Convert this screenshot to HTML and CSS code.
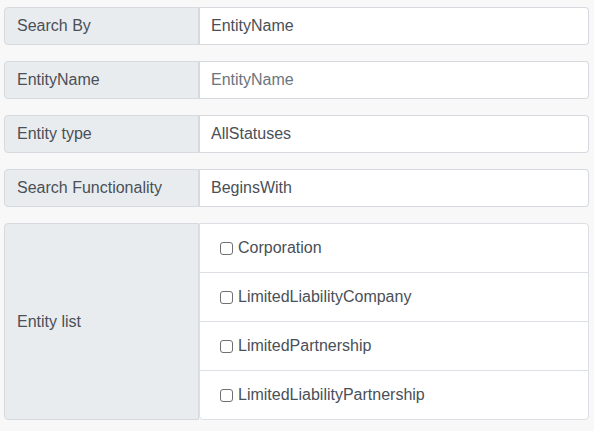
FILE: index.html
```html
<!DOCTYPE html>
<html>
<head>
<meta charset="utf-8">
<link rel="stylesheet" href="styles.css">
</head>
<body>
<div class="form">
  <div class="row">
    <div class="label">Search By</div>
    <div class="field">EntityName</div>
  </div>
  <div class="row">
    <div class="label">EntityName</div>
    <div class="field placeholder">EntityName</div>
  </div>
  <div class="row">
    <div class="label">Entity type</div>
    <div class="field">AllStatuses</div>
  </div>
  <div class="row">
    <div class="label">Search Functionality</div>
    <div class="field">BeginsWith</div>
  </div>
  <div class="row list-row">
    <div class="label">Entity list</div>
    <ul class="list">
      <li class="item"><span class="cb"></span>Corporation</li>
      <li class="item"><span class="cb"></span>LimitedLiabilityCompany</li>
      <li class="item"><span class="cb"></span>LimitedPartnership</li>
      <li class="item"><span class="cb"></span>LimitedLiabilityPartnership</li>
    </ul>
  </div>
</div>
</body>
</html>
```
FILE: styles.css
```css
html, body {
  margin: 0;
  background: #f8f8f8;
}
body {
  font-family: "Liberation Sans", Arial, sans-serif;
  font-size: 16px;
  line-height: 24px;
  color: #495057;
}
.form {
  padding: 7px 5px 0 4px;
  display: flex;
  flex-direction: column;
  gap: 16px;
}
.row {
  display: flex;
}
.label {
  width: 195px;
  box-sizing: border-box;
  padding: 6px 12px;
  background: #e9ecef;
  border: 1px solid #d6dadf;
  border-radius: 4px 0 0 4px;
  display: flex;
  align-items: center;
}
.field {
  flex: 1;
  background: #fff;
  border: 1px solid #d6dadf;
  border-left: none;
  border-radius: 0 4px 4px 0;
  padding: 6px 12px;
  height: 24px;
  box-shadow: inset 1px 0 0 #d6dadf;
}
.placeholder {
  color: #6c757d;
}
.list {
  flex: 1;
  margin: 0;
  padding: 0;
  list-style: none;
  background: #fff;
  border: 1px solid #dcdfe3;
  border-radius: 0 4px 4px 4px;
}
.item {
  padding: 12px 20px;
  color: #495057;
  border-top: 1px solid #dcdfe3;
  display: flex;
  align-items: center;
}
.item:first-child {
  border-top: none;
}
.cb {
  width: 11px;
  height: 11px;
  border: 1px solid #707070;
  border-radius: 3px;
  background: #fff;
  margin: 0 5px 0 0;
  flex-shrink: 0;
}
```
